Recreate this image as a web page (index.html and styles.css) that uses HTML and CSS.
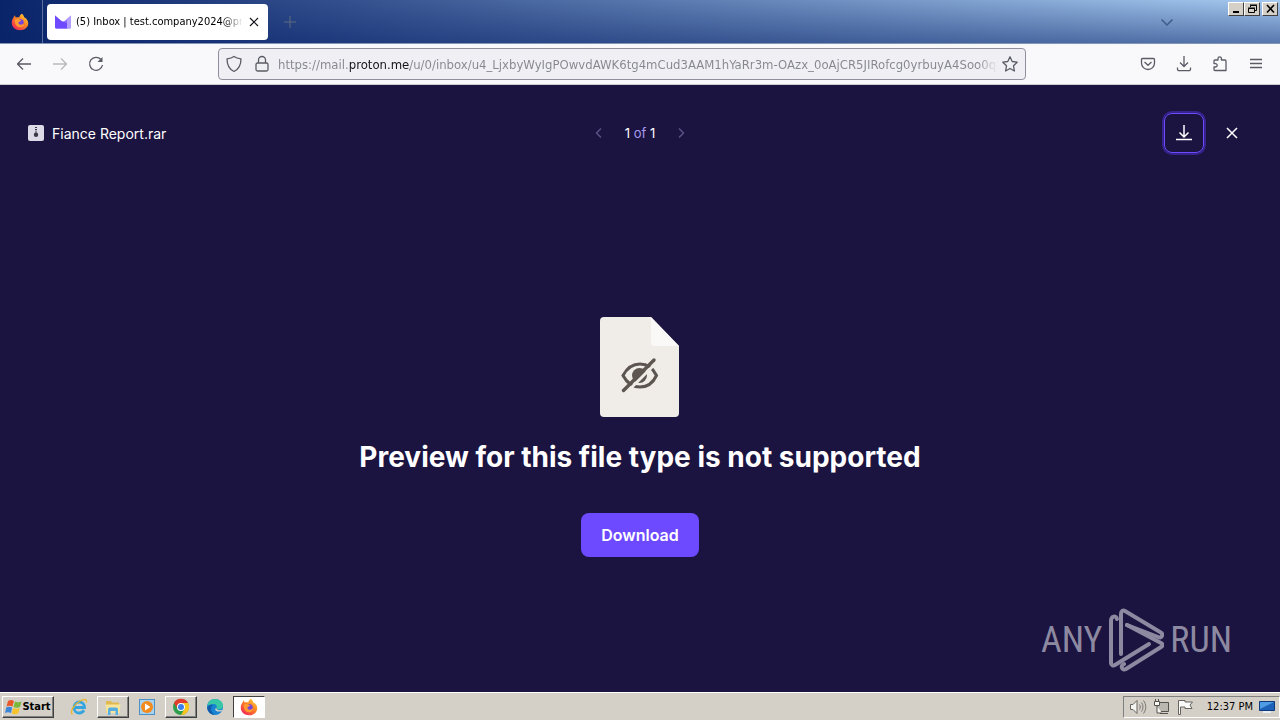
FILE: index.html
```html
<!DOCTYPE html>
<html lang="en">
<head>
  <meta charset="UTF-8">
  <meta name="viewport" content="width=device-width, initial-scale=1">
  <title>(5) Inbox | test.company2024@proton.me</title>
  <link rel="stylesheet" href="styles.css">
</head>
<body>

<!-- tab strip -->
<header class="titlebar">
  <button class="view-btn" aria-label="Firefox View">
    <svg width="18" height="18" viewBox="0 0 24 24">
      <defs>
        <linearGradient id="fox" x1="1" y1="0" x2="0.2" y2="1">
          <stop offset="0" stop-color="#ffe14d"/>
          <stop offset="0.45" stop-color="#ff8a1f"/>
          <stop offset="1" stop-color="#f0245c"/>
        </linearGradient>
      </defs>
      <path fill="url(#fox)" d="M14.500 1c2 1.500 2.600 3 3 4.500 2.500 1 5.500 4 5.500 8.200C23 19.500 18 23 12 23S1 18.800 1 13c0-3 1-5.600 2.600-7.500L4.500 3l2 3C8 5.500 9.500 5.600 11 6c.3-2.200 1.700-4 3.500-5z"/>
      <circle cx="12" cy="13" r="5" fill="#7543e0"/>
      <path fill="#ff9a2e" d="M5 9c2-2 5-1.500 6.500-.5L14 10c-1 1.500-3.500 1-4 2.500-.4 1.500 1 3 3 3s3.500-1 4.500-2c.2 3.500-2.500 5.500-5.500 5.500-4.500 0-7.500-4.500-7-10z"/>
    </svg>
  </button>
  <div class="tab">
    <svg width="16" height="16" viewBox="0 0 16 16">
      <path fill="#8a6eff" d="M0 1.500l6 5.200c1.200 1 2.800 1 4 0l6-5.200V13a1.500 1.500 0 0 1-1.500 1.500h-13A1.500 1.500 0 0 1 0 13z"/>
      <path fill="#6d4aff" d="M0 1.500l7 6 5 1.500v5.500H1.500A1.500 1.500 0 0 1 0 13z"/>
      <path fill="#b39dff" d="M12 5l4-3.500V13a1.500 1.500 0 0 1-1.500 1.500H12z"/>
    </svg>
    <span class="tab-title">(5) Inbox | test.company2024@pr</span>
    <button class="tab-close" aria-label="Close tab">
      <svg width="10" height="10" viewBox="0 0 10 10"><path d="M1 1l8 8M9 1l-8 8" stroke="#15141a" stroke-width="1.200"/></svg>
    </button>
  </div>
  <button class="new-tab" aria-label="New tab">
    <svg width="12" height="12" viewBox="0 0 12 12"><path d="M6 0v12M0 6h12" stroke="#5c6a7c"/></svg>
  </button>
  <button class="all-tabs" aria-label="List all tabs">
    <svg width="14" height="14" viewBox="0 0 14 14"><path d="M1.500 4.500L7 10l5.500-5.500" fill="none" stroke="#3f5c8c" stroke-width="1.500"/></svg>
  </button>
  <div class="win-btns">
    <button aria-label="Minimize"><svg width="11" height="10" viewBox="0 0 11 10"><path d="M2 7h6v2H2z"/></svg></button>
    <button aria-label="Restore"><svg width="11" height="10" viewBox="0 0 11 10"><path fill="none" stroke="#000" d="M3.500 3V1.500h6v5H8M3 1h7M1.500 4.500h6v4h-6zM1 4h7"/></svg></button>
    <button class="win-close" aria-label="Close"><svg width="11" height="10" viewBox="0 0 11 10"><path d="M2 1l7 7.500M9 1L2 8.500" stroke="#000" stroke-width="1.600"/></svg></button>
  </div>
</header>

<!-- navigation bar -->
<nav class="navbar">
  <button class="nav-btn" aria-label="Back">
    <svg width="16" height="16" viewBox="0 0 16 16"><path d="M15 8H1.500M7 2.500L1.500 8 7 13.500"/></svg>
  </button>
  <button class="nav-btn off" aria-label="Forward" disabled>
    <svg width="16" height="16" viewBox="0 0 16 16"><path d="M1 8h13.500M9 2.500L14.500 8 9 13.500"/></svg>
  </button>
  <button class="nav-btn" aria-label="Reload">
    <svg width="16" height="16" viewBox="0 0 16 16"><path d="M13 3.500A6.500 6.500 0 1 0 14.500 9"/><path d="M14.500 1v5h-5z" class="solid"/></svg>
  </button>
  <div class="urlbar">
    <svg width="16" height="18" viewBox="0 0 16 18"><path d="M8 1.500c2 1.500 4 2 7 2.300C15 10.500 12.500 14.500 8 16.500 3.500 14.500 1 10.500 1 3.800 4 3.500 6 3 8 1.500z"/></svg>
    <svg width="16" height="18" viewBox="0 0 16 18"><rect x="2" y="8" width="12" height="8" rx="1.500"/><path d="M4.500 8V5a3.500 3.500 0 0 1 7 0v3"/></svg>
    <input class="url" type="text" aria-label="Address" value="https://mail.proton.me/u/0/inbox/u4_LjxbyWyIgPOwvdAWK6tg4mCud3AAM1hYaRr3m-OAzx_0oAjCR5JIRofcg0yrbuyA4Soo0qR">
    <button class="star" aria-label="Bookmark this page">
      <svg width="16" height="16" viewBox="0 0 16 16"><path d="M8 .8l2.200 4.700 5 .7-3.700 3.600.9 5.200L8 12.500 3.600 15l.9-5.200L.8 6.200l5-.7z"/></svg>
    </button>
  </div>
  <button class="nav-btn" aria-label="Save to Pocket">
    <svg width="16" height="16" viewBox="0 0 16 16"><path d="M2.500 2.500h11a1 1 0 0 1 1 1V7a6.500 6.500 0 0 1-13 0V3.500a1 1 0 0 1 1-1zM4.500 6L8 9.300 11.500 6"/></svg>
  </button>
  <button class="nav-btn" aria-label="Downloads">
    <svg width="16" height="16" viewBox="0 0 16 16"><path d="M8 0v10.500M4 6.500l4 4 4-4M1.500 11.500v1.700a1.500 1.500 0 0 0 1.500 1.500h10a1.500 1.500 0 0 0 1.500-1.500v-1.700"/></svg>
  </button>
  <button class="nav-btn" aria-label="Extensions">
    <svg width="16" height="16" viewBox="0 0 16 16"><path d="M6 4V2.500a1.700 1.700 0 0 1 3.400 0V4H13a1 1 0 0 1 1 1v9.500H3a1 1 0 0 1-1-1V11h1.500a1.700 1.700 0 0 0 0-3.400H2V5a1 1 0 0 1 1-1z"/></svg>
  </button>
  <button class="nav-btn" aria-label="Menu">
    <svg width="16" height="16" viewBox="0 0 16 16"><path d="M2 3.500h12M2 7.500h12M2 11.500h12"/></svg>
  </button>
</nav>

<!-- attachment preview -->
<main class="preview">
  <div class="preview-head">
    <div class="file-name">
      <svg width="16" height="16" viewBox="0 0 16 16">
        <rect width="16" height="16" rx="2" fill="#dcdae6"/>
        <path fill="#3a3844" d="M7 2h2v1H7zM7 4h2v1H7zM7.500 5.500h1V8h-1zM8 7.500a2.200 2.200 0 1 1 0 4.400 2.200 2.200 0 0 1 0-4.400z"/>
      </svg>
      <span>Fiance Report.rar</span>
    </div>
    <div class="pager">
      <button aria-label="Previous" disabled><svg width="16" height="16" viewBox="0 0 16 16"><path d="M10 3.500L5.500 8l4.500 4.500"/></svg></button>
      <span class="pager-text"><b>1</b> of <b>1</b></span>
      <button aria-label="Next" disabled><svg width="16" height="16" viewBox="0 0 16 16"><path d="M6 3.500L10.500 8 6 12.500"/></svg></button>
    </div>
    <div class="actions">
      <button class="icon-btn focus" aria-label="Download file">
        <svg width="18" height="18" viewBox="0 0 18 18"><path d="M9 1v12M4.500 8.500L9 13l4.500-4.500M1 15.500h16"/></svg>
      </button>
      <button class="icon-btn" aria-label="Close preview">
        <svg width="18" height="18" viewBox="0 0 18 18"><path d="M4 4l10 10M14 4L4 14"/></svg>
      </button>
    </div>
  </div>

  <div class="unsupported">
    <svg width="80" height="100" viewBox="0 0 80 100">
      <path fill="#f0ece8" d="M4 0h47l28 29v67a4 4 0 0 1-4 4H4a4 4 0 0 1-4-4V4a4 4 0 0 1 4-4z"/>
      <path fill="#fbf9f8" d="M51 0l28 29H54a3 3 0 0 1-3-3z"/>
      <path fill="none" stroke="#5c5550" stroke-width="3" d="M23 58.500c4-7.500 10-11.500 17-11.500s13 4 16.500 11.500C53 66 47 70 40 70s-13-4-17-11.500z"/>
      <circle cx="39.500" cy="58.500" r="7.500" fill="#5c5550"/>
      <path stroke="#f0ece8" stroke-width="3" d="M26 76l31-31"/>
      <path stroke="#5c5550" stroke-width="3.400" stroke-linecap="round" d="M23.500 73.500L54 43"/>
    </svg>
    <h1>Preview for this file type is not supported</h1>
    <button class="download">Download</button>
  </div>

  <div class="watermark">
    <span>ANY</span>
    <svg width="56" height="64" viewBox="0 0 56 64">
      <path d="M9 11c-1-4-6-3-6 2v42c0 2 2 3 4 2l34-21"/>
      <path d="M13 46V6c0-3 2-4 4-3l35 21c4 2 2 7-2 5L19 17"/>
      <path d="M19 17l34 18c2 1 2 3 0 4L18 61c-4 2-6-3-2-5"/>
    </svg>
    <span>RUN</span>
  </div>
</main>

<!-- taskbar -->
<footer class="taskbar">
  <button class="start">
    <svg width="17" height="16" viewBox="0 0 17 16">
      <path fill="#e8582a" d="M3 2c2-1.300 4-1.300 6 0L7.500 7.500c-2-1-4-1-6 0z"/>
      <path fill="#79b83a" d="M10 2.500c2 1 4 1 6.500 0L15 8c-2 1-4 1-6.500 0z"/>
      <path fill="#3c86d8" d="M1.200 8.500c2-1 4-1 6 0L6 14c-2-1-4-1-6 0z"/>
      <path fill="#f7c32c" d="M8.200 9c2 1 4 1 6.500 0l-1.500 5.500c-2 1-4 1-6.500 0z"/>
    </svg>
    <span>Start</span>
  </button>
  <div class="quick">
    <button class="task" aria-label="Internet Explorer">
      <svg width="18" height="18" viewBox="0 0 18 18">
        <path fill="none" stroke="#35a5df" stroke-width="2.800" d="M4 9.500h10.500C14.500 6 12 4 9.300 4 6.300 4 4 6.500 4 9.700S6.300 15 9.300 15c2 0 3.700-1 4.700-2.700"/>
        <path fill="none" stroke="#e9b52d" stroke-width="1.300" d="M2.500 16.500C-.5 14 4 6 10 3c4-2 7-2 6.500 1.500"/>
      </svg>
    </button>
    <button class="task raised" aria-label="Explorer">
      <svg width="18" height="18" viewBox="0 0 18 18">
        <path fill="#e2b94e" d="M2 3h5l1 1.500h7V15H2z"/>
        <path fill="#f8e49b" d="M1.500 6.500h15L15.500 15h-13z"/>
        <path fill="#58aee0" d="M4 11.500a2 2 0 0 1 2-2h6a2 2 0 0 1 2 2V17h-2.500v-4h-5v4H4z"/>
      </svg>
    </button>
    <button class="task" aria-label="Media Player">
      <svg width="18" height="18" viewBox="0 0 18 18">
        <rect x="1.500" y="1.500" width="15" height="15" fill="#a8d3ef" stroke="#4d8fc2"/>
        <circle cx="9" cy="9" r="6" fill="#f28a1c"/><path fill="#fff" d="M7 5.500l5.500 3.500L7 12.500z"/>
      </svg>
    </button>
    <button class="task raised" aria-label="Chrome">
      <svg width="18" height="18" viewBox="0 0 18 18">
        <circle cx="9" cy="9" r="8" fill="#2f9e4c"/>
        <path fill="#e33b2e" d="M2 5a8 8 0 0 1 14 0H9a4 4 0 0 0-3.500 6z"/>
        <path fill="#fbc51b" d="M16 5a8 8 0 0 1-7 12l3.500-6A4 4 0 0 0 9 5z"/>
        <circle cx="9" cy="9" r="4" fill="#fff"/><circle cx="9" cy="9" r="3" fill="#3b7ded"/>
      </svg>
    </button>
    <button class="task" aria-label="Edge">
      <svg width="18" height="18" viewBox="0 0 18 18">
        <circle cx="9" cy="9" r="8" fill="#1683d3"/>
        <path fill="#38c7a5" d="M1.200 8C2 3.500 5.300 1 9 1c4.500 0 8 3 8 6.700 0 2.300-2 3.800-4 3.800-1.800 0-2.800-.8-2.500-1.500 1-2-.5-4-3-4C4.500 6 2 7 1.200 8z"/>
        <path fill="#125ca8" d="M7 7c-3 2-2.500 7 1.500 9.500-4 .5-7-3-7.300-7C2.500 7.500 4.500 6.500 7 7z"/>
        <path fill="#d4d0c8" d="M10.500 10c-.5 1.500 1.500 2.800 6 1.800l-1 1.500c-4 1-6.500-.5-6.500-2.300z"/>
      </svg>
    </button>
    <button class="task active" aria-label="Firefox">
      <svg width="18" height="18" viewBox="0 0 24 24">
        <path fill="url(#fox)" d="M14.500 1c2 1.500 2.600 3 3 4.500 2.500 1 5.500 4 5.500 8.200C23 19.500 18 23 12 23S1 18.800 1 13c0-3 1-5.600 2.600-7.500L4.500 3l2 3C8 5.500 9.500 5.600 11 6c.3-2.200 1.700-4 3.500-5z"/>
        <circle cx="12" cy="13" r="5" fill="#7543e0"/>
        <path fill="#ff9a2e" d="M5 9c2-2 5-1.500 6.500-.5L14 10c-1 1.500-3.500 1-4 2.500-.4 1.500 1 3 3 3s3.500-1 4.500-2c.2 3.500-2.500 5.500-5.500 5.500-4.500 0-7.500-4.500-7-10z"/>
      </svg>
    </button>
  </div>
  <div class="tray">
    <svg width="18" height="16" viewBox="0 0 18 16">
      <path fill="#f4f4f0" stroke="#66645f" d="M1.500 5.500H4l4-4v13l-4-4H1.500z"/>
      <path fill="none" stroke="#77756f" d="M10.500 5.500c1 1.500 1 3.500 0 5M12.500 3.500c2 2.500 2 6.500 0 9M14.500 1.500c3 4 3 9 0 13"/>
    </svg>
    <svg width="18" height="16" viewBox="0 0 18 16">
      <path fill="#b9b7b0" stroke="#55534e" d="M4.500 3.500h11v9h-11zM7 14.500h8"/>
      <path fill="#f8f8f4" stroke="#55534e" d="M1.500 2.500h5v4h-5zM2.500 0v2M5.500 0v2M4 7v7h5"/>
    </svg>
    <svg width="18" height="16" viewBox="0 0 18 16">
      <path fill="#fafaf8" stroke="#66645f" d="M1.500 15.500v-14H8V3h7.500l-2.500 3 2 3.500H8V8H3.500v7.500z"/>
    </svg>
    <time class="clock">12:37 PM</time>
    <svg width="16" height="14" viewBox="0 0 16 14">
      <path fill="#1d62b8" stroke="#0d3a7c" d="M.5 1.500h15v9H.5z"/><path fill="#4f9be4" d="M1 2h14L1 9z"/><path fill="#e9eef4" d="M4 11h8v2H4z"/>
    </svg>
  </div>
</footer>

</body>
</html>
```
FILE: styles.css
```css
* {
  box-sizing: border-box;
}

body {
  margin: 0;
  min-height: 100vh;
  display: flex;
  flex-direction: column;
  font-family: "DejaVu Sans Condensed", "DejaVu Sans", sans-serif;
  font-size: 11px;
  color: #000;
  background: #1b1340;
}

button {
  display: flex;
  align-items: center;
  justify-content: center;
  padding: 0;
  border: none;
  background: none;
  font: inherit;
  color: inherit;
}

svg {
  display: block;
  flex: none;
}

/* tab strip */
.titlebar {
  display: flex;
  align-items: center;
  height: 44px;
  background: linear-gradient(rgba(10, 36, 106, 0), rgba(10, 36, 106, 0.5)), linear-gradient(90deg, #0a246a, #a6caf0);
  border-bottom: 1px solid #8296b8;
}

.view-btn {
  width: 43px;
  height: 43px;
  padding-right: 3px;
  border-right: 1px solid #5a6ea0;
}

.tab {
  display: flex;
  align-items: center;
  gap: 5px;
  width: 221px;
  height: 36px;
  margin-left: 4px;
  padding: 0 8px;
  background: #fff;
  border-radius: 4px;
}

.tab-title {
  flex: 1;
  white-space: nowrap;
  -webkit-mask-image: linear-gradient(90deg, #000 calc(100% - 20px), transparent);
  mask-image: linear-gradient(90deg, #000 calc(100% - 20px), transparent);
}

.tab-close {
  width: 16px;
  height: 16px;
}

.new-tab {
  width: 36px;
  height: 36px;
  margin-left: 4px;
}

.all-tabs {
  width: 36px;
  height: 36px;
  margin-left: auto;
}

.win-btns {
  display: flex;
  align-self: flex-start;
  margin: 2px 2px 0 43px;
}

.win-btns button {
  width: 16px;
  height: 14px;
  background: #d4d0c8;
  border: 1px solid;
  border-color: #fff #404040 #404040 #fff;
}

.win-btns .win-close {
  margin-left: 2px;
}

/* navigation bar */
.navbar {
  display: flex;
  align-items: center;
  height: 41px;
  padding: 0 6px;
  background: #f9f9fb;
  border-bottom: 1px solid #cccccf;
}

.navbar svg {
  fill: none;
  stroke: #5b5b66;
  stroke-width: 1.3;
  stroke-linejoin: round;
}

.navbar .solid {
  fill: #5b5b66;
  stroke: none;
}

.nav-btn {
  width: 36px;
  height: 32px;
}

.off {
  opacity: 0.4;
}

.urlbar {
  display: flex;
  flex: 1;
  align-items: center;
  gap: 12px;
  min-width: 0;
  height: 32px;
  margin: 0 104px;
  padding: 0 7px;
  background: #f0f0f4;
  border: 1px solid #8f8f9d;
  border-radius: 4px;
}

/* the host name is darker than the rest of the address, the end fades out */
.url {
  flex: 1;
  min-width: 0;
  height: 28px;
  margin: 0 -8px 0 -4px;
  padding: 0;
  border: none;
  outline: none;
  font-family: inherit;
  font-size: 13px;
  color: transparent;
  background: linear-gradient(90deg, #85858f 71px, #15141a 71px, #15141a 132px, #85858f 132px, #85858f calc(100% - 20px), transparent);
  -webkit-background-clip: text;
  background-clip: text;
}

/* attachment preview */
.preview {
  position: relative;
  flex: 1;
  display: flex;
  flex-direction: column;
  font-family: Inter, sans-serif;
  font-size: 14px;
  color: #fff;
}

.preview-head {
  display: grid;
  grid-template-columns: 1fr auto 1fr;
  align-items: center;
  padding: 28px;
}

.file-name {
  display: flex;
  align-items: center;
  gap: 8px;
}

.preview-head button svg {
  fill: none;
  stroke: #fff;
  stroke-width: 1.5;
}

.pager {
  display: flex;
  align-items: center;
  gap: 18px;
}

.preview-head .pager svg {
  stroke: #5b5285;
}

.pager-text {
  font-size: 13px;
  color: #a99cf0;
}

.pager-text b {
  font-weight: 400;
  color: #fff;
}

.actions {
  display: flex;
  justify-content: flex-end;
  gap: 8px;
}

.icon-btn {
  width: 40px;
  height: 40px;
  border-radius: 8px;
}

.focus {
  border: 1px solid #6d4aff;
  box-shadow: 0 0 0 2px #35248a;
}

.unsupported {
  flex: 1;
  display: flex;
  flex-direction: column;
  align-items: center;
  justify-content: center;
}

.unsupported h1 {
  margin: 20px 0 36px;
  font-size: 28px;
  line-height: 40px;
  font-weight: 700;
}

.download {
  height: 44px;
  padding: 0 20px;
  background: #6d4aff;
  border-radius: 8px;
  font-size: 16px;
  font-weight: 600;
}

.watermark {
  position: absolute;
  right: 48px;
  bottom: 20px;
  display: flex;
  align-items: center;
  gap: 6px;
  font-family: "Roboto Condensed", "Liberation Sans Narrow", Roboto, sans-serif;
  font-size: 36px;
  font-weight: 400;
  color: #8d89a0;
}

.watermark svg {
  fill: none;
  stroke: #8d89a0;
  stroke-width: 4;
  stroke-linecap: round;
}

/* taskbar */
.taskbar {
  display: flex;
  align-items: center;
  height: 28px;
  padding: 0 0 0 2px;
  background: #d4d0c8;
  border-top: 1px solid #fff;
}

.start,
.raised {
  border: 1px solid;
  border-color: #fff #404040 #404040 #fff;
  box-shadow: inset -1px -1px #808080;
}

.start {
  width: 52px;
  height: 22px;
  font-weight: 700;
}

.quick {
  display: flex;
  gap: 2px;
  margin-left: 9px;
}

.task {
  width: 32px;
  height: 22px;
}

.active {
  background: #fff;
  border: 1px solid;
  border-color: #404040 #fff #fff #404040;
}

.tray {
  display: flex;
  align-items: center;
  gap: 6px;
  height: 22px;
  margin-left: auto;
  padding: 0 4px 0 5px;
  border: 1px solid;
  border-color: #808080 #fff #fff #808080;
}

.clock {
  margin-left: 6px;
}
```
